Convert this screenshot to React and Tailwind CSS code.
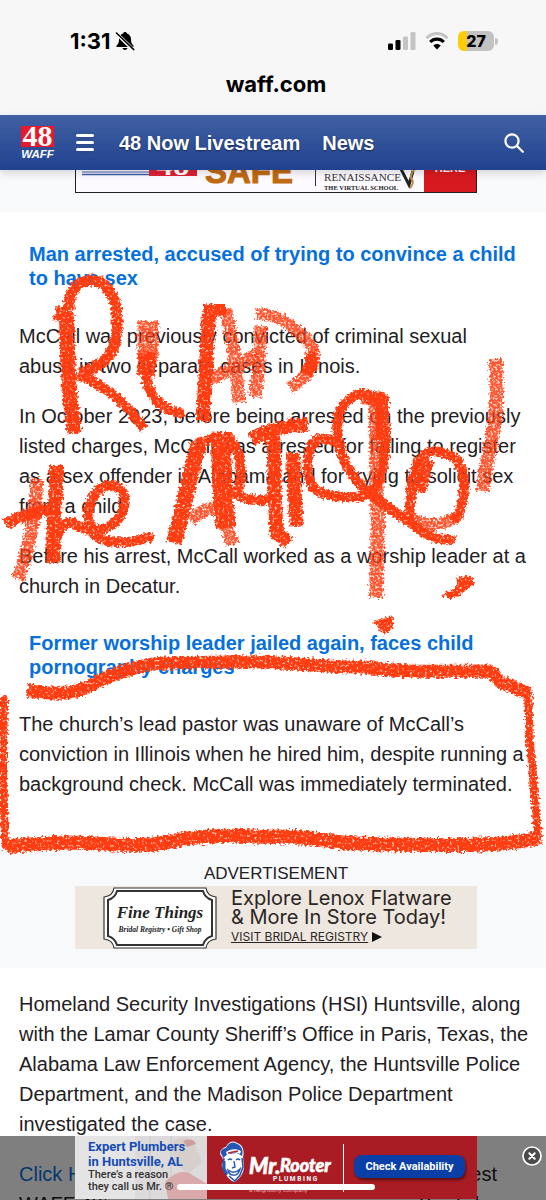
import React from "react";

function StatusBar() {
  return (
    <div className="flex h-[66px] items-center justify-between pt-4 pr-12 pl-[70px] font-['Inter',sans-serif]">
      <div className="flex items-center gap-1">
        <span className="text-[22px] leading-6 font-bold text-black">1:31</span>
        <svg viewBox="0 0 20 20" className="size-5" role="img" aria-label="Silent mode">
          <path d="M10 1c-1 0-1.700.6-1.900 1.400C5.500 3.200 4 5.400 4 8.200c0 3.400-.8 4.600-2.200 6-.8.9-.4 1.800.7 1.800h15c1.100 0 1.500-.9.700-1.800-1.400-1.400-2.200-2.600-2.200-6 0-2.800-1.500-5-4.100-5.800C11.700 1.600 11 1 10 1zM7.500 17c.3 1.200 1.300 2 2.500 2s2.200-.8 2.500-2z" fill="#000" />
          <path d="M1.500 2.500 18.500 19" stroke="#f7f7f7" strokeWidth="3.600" />
          <path d="M1.500 2 18.800 18.600" stroke="#000" strokeWidth="1.500" strokeLinecap="round" />
        </svg>
      </div>
      <div className="flex items-center gap-[9px]">
        <svg viewBox="0 0 28 18" className="h-[18px] w-7" role="img" aria-label="Signal">
          <rect x="0" y="11.500" width="5" height="6.500" rx="1.300" fill="#000" />
          <rect x="7.500" y="8" width="5" height="10" rx="1.300" fill="#000" />
          <rect x="15" y="4.500" width="5" height="13.500" rx="1.300" fill="#c4c4c5" />
          <rect x="22.500" y="0" width="5" height="18" rx="1.300" fill="#c4c4c5" />
        </svg>
        <svg viewBox="0 0 24 18" className="h-[18px] w-6" role="img" aria-label="Wi-Fi">
          <path d="M1.500 6.200C7.500-.1 16.500-.1 22.500 6.200" fill="none" stroke="#c4c4c5" strokeWidth="3" />
          <path d="M5.200 10C9 6.100 15 6.100 18.800 10" fill="none" stroke="#000" strokeWidth="3.200" />
          <path d="M12 17.500 8.200 13.600c2.100-2.100 5.500-2.100 7.600 0z" fill="#000" />
        </svg>
        <div className="flex items-center gap-px">
          <div className="flex h-5 w-9 items-center justify-center rounded-md bg-linear-to-r from-[#ffcc0a] from-26% to-[#c2c2c3] to-26% text-base leading-5 font-extrabold text-black">
            27
          </div>
          <div className="h-[7px] w-[3px] rounded-r-full bg-[#c2c2c3]" />
        </div>
      </div>
    </div>
  );
}

function SiteHeader() {
  return (
    <header className="relative z-10 flex h-[55px] shrink-0 items-center bg-linear-to-b from-[#4160a3] to-[#21438f] pr-[22px] pl-[21px] text-white shadow-[0_3px_8px_rgba(0,0,0,0.15)]">
      <a href="#home" aria-label="48 WAFF" className="w-[34px]">
        <svg viewBox="0 0 34 34" className="size-[34px]" role="img" aria-label="48 WAFF">
          <rect x="0" y="0" width="33" height="21" fill="#e9192c" />
          <text x="16.500" y="20" textAnchor="middle" fontFamily="Liberation Serif" fontWeight="700" fontSize="30" fill="#fff">48</text>
          <text x="16.500" y="32" textAnchor="middle" fontFamily="Liberation Sans" fontWeight="700" fontStyle="italic" fontSize="11.500" fill="#fff">WAFF</text>
        </svg>
      </a>
      <button type="button" aria-label="Open menu" className="ml-[21px] flex w-[18px] flex-col gap-1">
        <span className="h-[3px] rounded-full bg-white shadow-sm" />
        <span className="h-[3px] rounded-full bg-white shadow-sm" />
        <span className="h-[3px] rounded-full bg-white shadow-sm" />
      </button>
      <nav className="ml-[25px] flex flex-1 gap-[22px] text-[20px] leading-6 font-bold [text-shadow:0_1px_2px_rgba(0,0,0,0.5)]">
        <a href="#live">48 Now Livestream</a>
        <a href="#news">News</a>
      </nav>
      <button type="button" aria-label="Search">
        <svg viewBox="0 0 20 20" className="size-5" fill="none" stroke="#fff" strokeWidth="2.200" strokeLinecap="round">
          <circle cx="8" cy="8" r="6.600" />
          <path d="m13 13 5.800 5.800" />
        </svg>
      </button>
    </header>
  );
}

function SchoolAd() {
  return (
    <section className="bg-[#f8f9fb] pb-[19px] pl-[6px]">
      <div className="mx-auto flex h-[23px] w-[402px] items-end overflow-hidden">
        <svg viewBox="0 0 402 64" className="h-16 w-full shrink-0" role="img" aria-label="Renaissance, the virtual school">
          <rect x=".5" y=".5" width="401" height="63" fill="#fdfbff" stroke="#222" />
          <path d="M7 43H74" stroke="#4060b0" strokeWidth="1" />
          <path d="M7 45.500H74" stroke="#4060b0" strokeWidth="1.500" />
          <rect x="74" y="24" width="48" height="23" fill="#df2135" />
          <text x="98" y="46" textAnchor="middle" fontFamily="Liberation Serif" fontWeight="700" fontSize="33" fill="#fff">48</text>
          <text x="130" y="54" fontFamily="Liberation Sans" fontWeight="700" fontSize="33" fill="#c06a12" stroke="#c06a12" strokeWidth="1">SAFE</text>
          <path d="M240.500 12V57" stroke="#333" />
          <text x="249" y="52" fontFamily="Liberation Serif" fontSize="11.200" fill="#333">RENAISSANCE</text>
          <text x="249" y="60.500" fontFamily="Liberation Serif" fontWeight="700" fontSize="6.500" fill="#222">THE VIRTUAL SCHOOL</text>
          <path d="M326 40l8 16 4-14" fill="none" stroke="#222" strokeWidth="3" />
          <path d="M340 40c-4 4-5 9-3 11s0 6-2 8" fill="none" stroke="#b88f45" strokeWidth="2" />
          <rect x="349" y="1" width="52" height="62" fill="#d71920" />
          <text x="375" y="43" textAnchor="middle" fontFamily="Liberation Sans" fontWeight="700" fontSize="11" fill="#fff">HERE</text>
        </svg>
      </div>
    </section>
  );
}

function RegistryAd() {
  return (
    <section className="mt-[46px] bg-[#f8f9fb] pt-[17px] pb-[19px] pl-[6px]">
      <p className="text-center text-[17px] leading-6">ADVERTISEMENT</p>
      <a href="#registry" className="mx-auto flex h-[63px] w-[402px] items-center bg-[#eee7e0] pl-7 text-[#2b2523]">
        <svg viewBox="0 0 114 62" className="h-[62px] w-[114px]" role="img" aria-label="Fine Things bridal registry and gift shop">
          <path d="M11 1H103Q104 9 113 10V52Q104 53 103 61H11Q10 53 1 52V10Q10 9 11 1Z" fill="#fff" stroke="#333" strokeWidth="1.200" />
          <path d="M14 4H100Q102 11 109 13V49Q102 51 100 58H14Q12 51 5 49V13Q12 11 14 4Z" fill="#fff" stroke="#333" strokeWidth="2" />
          <text x="57" y="31" textAnchor="middle" fontFamily="Liberation Serif" fontStyle="italic" fontWeight="700" fontSize="17" fill="#222">Fine Things</text>
          <text x="57" y="45" textAnchor="middle" fontFamily="Liberation Serif" fontStyle="italic" fontWeight="700" fontSize="7.500" fill="#222">Bridal Registry • Gift Shop</text>
        </svg>
        <div className="ml-[14px] font-['Inter',sans-serif] text-[20px] leading-[19px] whitespace-nowrap">
          <p>Explore Lenox Flatware</p>
          <p>&amp; More In Store Today!</p>
          <p className="flex items-center gap-1 text-xs leading-[20px]">
            <span className="underline">VISIT BRIDAL REGISTRY</span>
            <svg viewBox="0 0 10 10" className="size-[10px]" aria-hidden="true"><path d="M0 0 10 5 0 10z" fill="#111" /></svg>
          </p>
        </div>
      </a>
    </section>
  );
}

function Mascot() {
  return (
    <svg viewBox="0 0 26 42" className="h-[42px] w-[26px]" role="img" aria-label="Plumber mascot">
      <path d="M3 16C-1 12 2 7 7 6 9 1 14-1 18 2c5 1 8 7 6 14l1 9c0 8-5 13-9 16-5-1-10-7-11-13-3-1-3-6 0-7z" fill="#fff" />
      <path d="M3 14C0 11 3 7 7 7c2-5 7-7 11-4 4 1 7 6 5 12l-5-3-9 1-5 4z" fill="#2458b5" />
      <path d="M7 11c4-3 10-4 15-1l-1 3c-4-2-9-2-13 1z" fill="#fff" />
      <path d="M9 12l10-2" stroke="#c02232" strokeWidth="1.500" />
      <path d="M5 17l-1 10 4 7M23 17l1 9-3 8-5 6-6-5" fill="none" stroke="#2458b5" strokeWidth="1.600" />
      <path d="M9 19q2-2 4 0M17 19q2-2 4 0M15 20l1 6-3 1M9 29q6 5 12-1-2 7-7 6-4 0-5-5z" fill="none" stroke="#2458b5" strokeWidth="1.400" />
      <path d="M5 20v8l3 5" stroke="#2458b5" strokeWidth="3" fill="none" />
    </svg>
  );
}

function StickyAd() {
  return (
    <aside className="absolute inset-x-0 bottom-0 flex h-16 justify-center bg-black/50 pl-[6px]">
      <div className="flex h-[63px] w-[402px] overflow-hidden font-['Roboto',sans-serif]">
        <div className="relative w-[132px] overflow-hidden bg-[#e5e4e4] pt-[3px] pl-[13px]">
          <svg viewBox="0 0 72 63" className="absolute top-0 right-0 h-[63px] w-[72px]" aria-hidden="true">
            <path d="M0 0H72V63H0z" fill="#dcdada" />
            <path d="M15 0v63M36 0v63" stroke="#c8c6c6" />
            <path d="M38 5q15-9 22 4l7 17-14 12-14-12z" fill="#d6cfcc" />
            <path d="M30 46q12-13 24-9l18 11v15H33z" fill="#d9aaa9" />
            <path d="M48 5q10-4 13 3l-9 3z" fill="#cf9e9e" />
          </svg>
          <div className="relative whitespace-nowrap">
            <p className="text-[13px] leading-[15px] font-bold text-[#154bb5]">Expert Plumbers<br />in Huntsville, AL</p>
            <p className="text-[11px] leading-3 font-medium text-[#333]">There’s a reason<br />they call us Mr. ®</p>
          </div>
        </div>
        <div className="flex flex-1 items-start bg-[#aa1c24] pt-[5px] pl-3 text-white">
          <Mascot />
          <svg viewBox="0 0 90 54" className="ml-1 h-[54px] w-[90px]" role="img" aria-label="Mr. Rooter Plumbing">
            <text x="0" y="33" fontFamily="Lato" fontStyle="italic" fontWeight="900" fontSize="22" fill="#fff" stroke="#fff" strokeWidth=".6">Mr.</text>
            <text x="31" y="31" fontFamily="Lato" fontStyle="italic" fontWeight="900" fontSize="18" fill="#fff" stroke="#fff" strokeWidth=".6">Rooter</text>
            <text x="24" y="40" fontFamily="Roboto" fontWeight="700" fontSize="6.500" fill="#fff">P L U M B I N G</text>
            <text x="0" y="51" fontFamily="Roboto" fontSize="6" fill="#e2a5a8">a neighborly company</text>
          </svg>
          <div className="mt-[3px] ml-1 h-12 w-px bg-white" />
          <button type="button" className="mt-[14px] ml-[10px] h-[23px] w-[111px] rounded-lg bg-[#0b3fa8] text-[11px] leading-4 font-bold whitespace-nowrap shadow-[1px_2px_3px_rgba(0,0,0,0.5)]">
            Check Availability
          </button>
        </div>
      </div>
      <button type="button" aria-label="Close advertisement" className="absolute top-[10px] right-1">
        <svg viewBox="0 0 20 20" className="size-5" fill="#4b4b4b" stroke="#fff" strokeLinecap="round">
          <circle cx="10" cy="10" r="9" strokeWidth="1.700" />
          <path d="m7.300 7.300 5.400 5.400m0-5.400-5.400 5.400" strokeWidth="2" />
        </svg>
      </button>
      <div className="absolute bottom-[10px] left-[177px] h-[6px] w-[198px] rounded-full bg-white" />
    </aside>
  );
}

function Scribble() {
  return (
    <svg viewBox="0 0 546 1200" className="pointer-events-none absolute top-0 left-0 z-20 h-[1200px] w-[546px]" aria-hidden="true">
      <defs>
        <filter id="crayon" filterUnits="userSpaceOnUse" x="0" y="0" width="546" height="1200" colorInterpolationFilters="sRGB">
          <feTurbulence type="fractalNoise" baseFrequency="0.4" numOctaves="2" seed="4" result="noise" />
          <feDisplacementMap in="SourceGraphic" in2="noise" scale="7" xChannelSelector="R" yChannelSelector="G" result="rough" />
          <feColorMatrix in="noise" type="matrix" values="0 0 0 0 0  0 0 0 0 0  0 0 0 0 0  0 0 3 0 -0.3" result="grain" />
          <feComposite in="rough" in2="grain" operator="in" />
        </filter>
        <filter id="chalk" filterUnits="userSpaceOnUse" x="0" y="0" width="546" height="1200" colorInterpolationFilters="sRGB">
          <feTurbulence type="fractalNoise" baseFrequency="0.45" numOctaves="2" seed="9" result="noise" />
          <feDisplacementMap in="SourceGraphic" in2="noise" scale="8" xChannelSelector="R" yChannelSelector="G" result="rough" />
          <feColorMatrix in="noise" type="matrix" values="0 0 0 0 0  0 0 0 0 0  0 0 0 0 0  0 0 3 0 -0.600" result="grain" />
          <feComposite in="rough" in2="grain" operator="in" />
        </filter>
      </defs>
      <g fill="none" stroke="#ff3c10" strokeLinejoin="round" strokeOpacity=".88" filter="url(#chalk)">
        <path d="M148 321L148 359" strokeWidth="21" />
        <path d="M225 309Q235 345 239 403M208 378Q222 377 257 354" strokeWidth="13" />
        <path d="M261 326Q259 370 255 397" strokeWidth="13" />
        <path d="M256 314Q280 313 300 334Q315 344 314 360Q311 376 290 388" strokeWidth="12" />
        <path d="M496 359C497 395 497 420 490 447L482 491" strokeWidth="14" />
        <path d="M37 478C36 510 32 540 18 579" strokeWidth="13" />
        <path d="M190 520Q207 506 219 508M226 526L233 544" strokeWidth="13" />
        <path d="M375 398C378 450 375 485 378 520L376 598" strokeWidth="14" />
        <path d="M409 517C432 532 448 521 458 517" strokeWidth="12" />
      </g>
      <g fill="none" stroke="#ff3c10" strokeLinejoin="round" filter="url(#crayon)">
        <path d="M69 310C68 289 79 281 91 280C108 280 119 301 117 324C117 350 108 365 80 373" strokeWidth="11" />
        <path d="M77 374Q98 382 117 398Q130 409 144 429" strokeWidth="10" />
        <path d="M55 313l10 2M66 311C68 340 67 370 70 395L74 433" strokeWidth="15" />
        <path d="M148 352L146 376" strokeWidth="18" />
        <path d="M209 310C207 345 205 385 203 421" strokeWidth="14" />
        <path d="M203 310H226" strokeWidth="12" />
        <path d="M310 352Q314 363 306 375" strokeWidth="12" />
        <path d="M222 432C220 465 223 500 226 528" strokeWidth="20" />
        <path d="M199 443C192 465 184 505 174 543" strokeWidth="16" />
        <path d="M56 465Q57 495 54 510L53 563" strokeWidth="14" />
        <path d="M5 524Q30 511 61 508" strokeWidth="12" />
        <path d="M251 439Q281 424 308 425M273 431C275 465 274 510 277 533L289 543" strokeWidth="14" />
        <path d="M293 453Q294 490 297 526" strokeWidth="14" />
        <path d="M362 397L382 399V440" strokeWidth="14" />
        <path d="M427 459L418 492" strokeWidth="15" />
        <g strokeLinecap="round" strokeWidth="10">
          <path d="M55 547C58 525 68 518 78 526C92 534 112 530 121 515C128 502 125 487 112 485C96 485 89 503 88 515C89 535 101 541 115 542Q135 543 149 537" />
          <path d="M146 378Q151 399 164 407Q172 412 180 413" />
          <path d="M200 442L226 436Q238 445 240 462Q243 485 235 493Q246 502 268 500" />
          <path d="M341 452C339 440 329 438 318 439C307 447 306 462 309 478C312 494 329 496 346 497C361 498 373 495 379 481C386 462 387 435 383 413C379 395 362 389 350 399C337 408 335 424 339 443C344 469 361 488 379 500C393 513 409 521 426 534C437 539 446 540 451 540" />
          <path d="M456 518C466 503 467 472 456 459C443 450 429 449 422 457C412 467 411 491 409 519" />
          <path d="M528 693L530 742L538 836" strokeWidth="8" />
          <path d="M4 699L3 767L5 845" strokeWidth="8" />
        </g>
        <path d="M27 690Q40 694 68 693C87 692 102 675 129 670C155 660 190 663 225 662C280 660 320 668 365 667C400 673 440 671 490 671L501 682L528 693" strokeWidth="13" />
        <path d="M540 837Q515 845 453 845C400 845 380 845 348 843C315 840 300 835 261 837C220 834 210 837 191 838C160 842 165 845 139 845C100 845 75 841 54 843C32 846 30 842 6 847" strokeWidth="14" />
        <path d="M376 622L391 618L392 626L384 633Z" fill="#ff3c10" strokeWidth="3" />
        <path d="M458 579L469 577L473 583L463 591L452 597L444 595L458 587Z" fill="#ff3c10" strokeWidth="3" />
      </g>
    </svg>
  );
}

export default function App() {
  return (
    <div className="relative flex h-screen flex-col overflow-hidden bg-white font-['Liberation_Sans',Arial,sans-serif] text-[#1f2023]">
      <div className="h-[115px] shrink-0 bg-[#f7f7f7]">
        <StatusBar />
        <p className="pt-1 pl-[6px] text-center font-['Inter',sans-serif] text-[22px] leading-7 font-bold text-black">waff.com</p>
      </div>
      <SiteHeader />
      <main className="min-h-0 flex-1 overflow-hidden text-[20px] leading-[30px] whitespace-nowrap">
        <SchoolAd />
        <article>
          <div className="px-[19px] pt-[30px]">
            <a href="#arrest" className="block pl-[10px] leading-6 font-bold text-[#0670dc]">
              Man arrested, accused of trying to convince a child<br />to have sex
            </a>
            <div className="mt-[31px] space-y-5">
              <p>McCall was previously convicted of criminal sexual<br />abuse in two separate cases in Illinois.</p>
              <p>In October 2023, before being arrested on the previously<br />listed charges, McCall was arrested for failing to register<br />as a sex offender in Alabama and for trying to solicit sex<br />from a child.</p>
              <p>Before his arrest, McCall worked as a worship leader at a<br />church in Decatur.</p>
            </div>
            <a href="#jailed" className="mt-[30px] block pl-[10px] leading-6 font-bold text-[#0670dc]">
              Former worship leader jailed again, faces child<br />pornography charges
            </a>
            <p className="mt-[30px]">The church’s lead pastor was unaware of McCall’s<br />conviction in Illinois when he hired him, despite running a<br />background check. McCall was immediately terminated.</p>
          </div>
          <RegistryAd />
          <div className="space-y-5 px-[19px] pt-[21px]">
            <p>Homeland Security Investigations (HSI) Huntsville, along<br />with the Lamar County Sheriff’s Office in Paris, Texas, the<br />Alabama Law Enforcement Agency, the Huntsville Police<br />Department, and the Madison Police Department<br />investigated the case.</p>
            <div>
              <p className="flex justify-between pr-[30px]"><a href="#subscribe" className="text-[#0670dc]">Click H</a><span>est</span></p>
              <p className="flex justify-between pr-[30px]"><span>WAFF 48’s</span><span>YouTube</span></p>
            </div>
          </div>
        </article>
      </main>
      <StickyAd />
      <Scribble />
    </div>
  );
}
